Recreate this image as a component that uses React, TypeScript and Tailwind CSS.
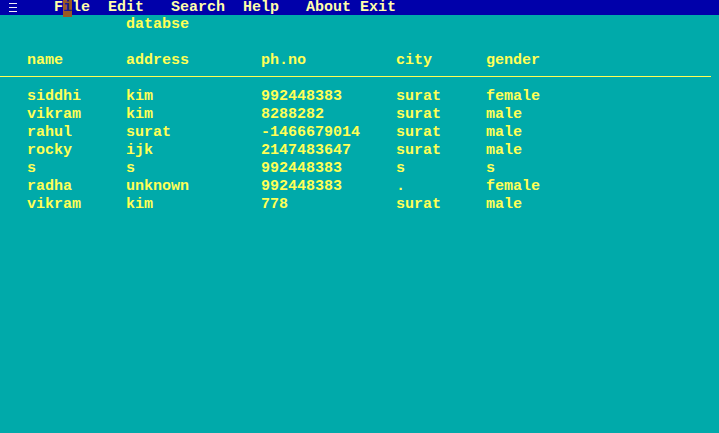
const rows = [
  ["siddhi", "kim", "992448383", "surat", "female"],
  ["vikram", "kim", "8288282", "surat", "male"],
  ["rahul", "surat", "-1466679014", "surat", "male"],
  ["rocky", "ijk", "2147483647", "surat", "male"],
  ["s", "s", "992448383", "s", "s"],
  ["radha", "unknown", "992448383", ".", "female"],
  ["vikram", "kim", "778", "surat", "male"],
];

const header = ["name", "address", "ph.no", "city", "gender"];

function Row({ cells }: { cells: string[] }) {
  return (
    <div className="flex h-[18px] items-center pt-[2px] pl-[27px] whitespace-pre">
      <span className="w-[99px]">{cells[0]}</span>
      <span className="w-[135px]">{cells[1]}</span>
      <span className="w-[135px]">{cells[2]}</span>
      <span className="w-[90px]">{cells[3]}</span>
      <span>{cells[4]}</span>
    </div>
  );
}

export default function App() {
  return (
    <div
      className="w-[719px] h-[433px] bg-[#00aaaa] text-[#ffff55] text-[15px] font-bold overflow-hidden"
      style={{ fontFamily: '"Liberation Mono", "DejaVu Sans Mono", monospace' }}
    >
      {/* Menu bar */}
      <div className="flex h-[15px] items-start bg-[#0000aa] text-[#ffffaa] leading-[15px] whitespace-pre">
        <span className="ml-[9px] w-[9px] h-[15px] flex flex-col justify-center gap-[3px]">
          <span className="h-px w-[8px] bg-[#f0f0f8]" />
          <span className="h-px w-[8px] bg-[#f0f0f8]" />
          <span className="h-px w-[8px] bg-[#f0f0f8]" />
        </span>
        <span className="ml-[36px]">F</span>
        <span className="inline-block h-[17px] w-[9px] bg-[#9a5a22] text-[#1a1a90]">i</span>
        <span>le</span>
        <span className="ml-[18px]">Edit</span>
        <span className="ml-[27px]">Search</span>
        <span className="ml-[18px]">Help</span>
        <span className="ml-[27px]">About</span>
        <span className="ml-[9px]">Exit</span>
      </div>

      <div>
        <div className="flex h-[18px] items-center pt-[2px] pl-[126px]">databse</div>
        <div className="h-[18px]" />
        <Row cells={header} />
        <div className="h-[18px] flex items-start pt-[7px]">
          <div className="h-px w-[711px] bg-[#ffff55]" />
        </div>
        {rows.map((r, i) => (
          <Row key={i} cells={r} />
        ))}
      </div>
    </div>
  );
}
